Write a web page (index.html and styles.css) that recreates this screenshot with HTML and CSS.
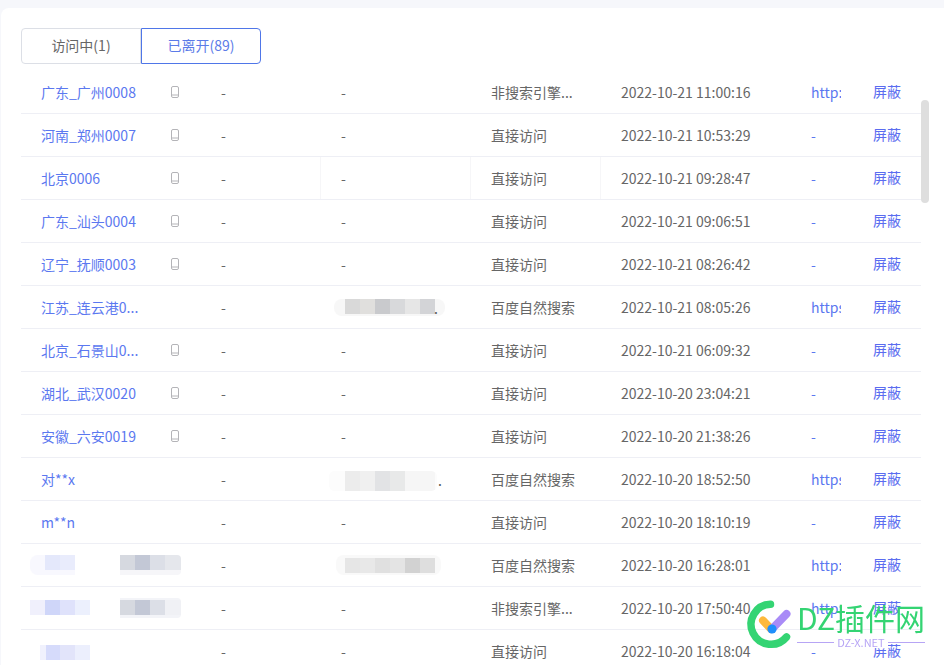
FILE: index.html
```html
<!DOCTYPE html>
<html lang="zh-CN">
<head>
<meta charset="utf-8">
<title>访客列表</title>
<link rel="stylesheet" href="styles.css">
</head>
<body>
<main class="card">
  <div class="tabs">
    <button class="tab">访问中(1)</button>
    <button class="tab active">已离开(89)</button>
  </div>
  <div class="rows">
    <div class="row"><span class="link">广东_广州0008</span><span><svg class="phone" viewBox="0 0 10 12"><rect x="1.5" y="0.5" width="7" height="11" rx="1.5"/><path d="M1.5 9h7"/></svg></span><span>-</span><span>-</span><span>非搜索引擎...</span><span>2022-10-21 11:00:16</span><span class="link"><span class="clip">http://www.example.com</span></span><span class="link act">屏蔽</span></div>
    <div class="row"><span class="link">河南_郑州0007</span><span><svg class="phone" viewBox="0 0 10 12"><rect x="1.5" y="0.5" width="7" height="11" rx="1.5"/><path d="M1.5 9h7"/></svg></span><span>-</span><span>-</span><span>直接访问</span><span>2022-10-21 10:53:29</span><span class="link">-</span><span class="link act">屏蔽</span></div>
    <div class="row ruled"><span class="link">北京0006</span><span><svg class="phone" viewBox="0 0 10 12"><rect x="1.5" y="0.5" width="7" height="11" rx="1.5"/><path d="M1.5 9h7"/></svg></span><span>-</span><span>-</span><span>直接访问</span><span>2022-10-21 09:28:47</span><span class="link">-</span><span class="link act">屏蔽</span></div>
    <div class="row"><span class="link">广东_汕头0004</span><span><svg class="phone" viewBox="0 0 10 12"><rect x="1.5" y="0.5" width="7" height="11" rx="1.5"/><path d="M1.5 9h7"/></svg></span><span>-</span><span>-</span><span>直接访问</span><span>2022-10-21 09:06:51</span><span class="link">-</span><span class="link act">屏蔽</span></div>
    <div class="row"><span class="link">辽宁_抚顺0003</span><span><svg class="phone" viewBox="0 0 10 12"><rect x="1.5" y="0.5" width="7" height="11" rx="1.5"/><path d="M1.5 9h7"/></svg></span><span>-</span><span>-</span><span>直接访问</span><span>2022-10-21 08:26:42</span><span class="link">-</span><span class="link act">屏蔽</span></div>
    <div class="row"><span class="link">江苏_连云港0...</span><span></span><span>-</span><span class="masked"><i class="blur b-a"></i><i class="tail t-a">.</i></span><span>百度自然搜索</span><span>2022-10-21 08:05:26</span><span class="link"><span class="clip">https://www.baidu.com</span></span><span class="link act">屏蔽</span></div>
    <div class="row"><span class="link">北京_石景山0...</span><span><svg class="phone" viewBox="0 0 10 12"><rect x="1.5" y="0.5" width="7" height="11" rx="1.5"/><path d="M1.5 9h7"/></svg></span><span>-</span><span>-</span><span>直接访问</span><span>2022-10-21 06:09:32</span><span class="link">-</span><span class="link act">屏蔽</span></div>
    <div class="row"><span class="link">湖北_武汉0020</span><span><svg class="phone" viewBox="0 0 10 12"><rect x="1.5" y="0.5" width="7" height="11" rx="1.5"/><path d="M1.5 9h7"/></svg></span><span>-</span><span>-</span><span>直接访问</span><span>2022-10-20 23:04:21</span><span class="link">-</span><span class="link act">屏蔽</span></div>
    <div class="row"><span class="link">安徽_六安0019</span><span><svg class="phone" viewBox="0 0 10 12"><rect x="1.5" y="0.5" width="7" height="11" rx="1.5"/><path d="M1.5 9h7"/></svg></span><span>-</span><span>-</span><span>直接访问</span><span>2022-10-20 21:38:26</span><span class="link">-</span><span class="link act">屏蔽</span></div>
    <div class="row"><span class="link">对**x</span><span></span><span>-</span><span class="masked"><i class="blur b-b"></i><i class="tail t-b">.</i></span><span>百度自然搜索</span><span>2022-10-20 18:52:50</span><span class="link"><span class="clip">https://www.baidu.com</span></span><span class="link act">屏蔽</span></div>
    <div class="row"><span class="link">m**n</span><span></span><span>-</span><span>-</span><span>直接访问</span><span>2022-10-20 18:10:19</span><span class="link">-</span><span class="link act">屏蔽</span></div>
    <div class="row"><span class="masked"><i class="blur b-c"></i><i class="blur b-d"></i></span><span></span><span>-</span><span class="masked"><i class="blur b-e"></i></span><span>百度自然搜索</span><span>2022-10-20 16:28:01</span><span class="link"><span class="clip">http://www.example.com</span></span><span class="link act">屏蔽</span></div>
    <div class="row"><span class="masked"><i class="blur b-f"></i><i class="blur b-g"></i></span><span></span><span>-</span><span>-</span><span>非搜索引擎...</span><span>2022-10-20 17:50:40</span><span class="link"><span class="clip">http://www.example.com</span></span><span class="link act">屏蔽</span></div>
    <div class="row"><span class="masked"><i class="blur b-h"></i></span><span></span><span>-</span><span>-</span><span>直接访问</span><span>2022-10-20 16:18:04</span><span class="link">-</span><span class="link act">屏蔽</span></div>
  </div>
  <div class="thumb"></div>
</main>
<aside class="mark">
  <svg class="mark-logo" viewBox="0 0 50 50">
    <path class="ring" d="M26.5 4.3A20 20 0 1 0 42.5 37"/>
    <path class="tick-y" d="M19 20.5L27 29"/>
    <path class="tick-p" d="M28 29L42.5 14"/>
    <circle class="tick-b" cx="28" cy="29" r="4.6"/>
  </svg>
  <div class="mark-text">
    <div class="mark-name">DZ插件网</div>
    <div class="mark-sub"><span>DZ-X.NET</span></div>
  </div>
</aside>
</body>
</html>
```
FILE: styles.css
```css
* { box-sizing: border-box; }
html, body { height: 100%; }
body {
  margin: 0;
  padding: 8px 0 0 1px;
  overflow: hidden;
  background: #f6f7fb;
  font: 14px/20px "Noto Sans CJK SC", "Liberation Sans", sans-serif;
  color: #666;
}
.card {
  position: relative;
  height: 657px;
  overflow: hidden;
  padding: 20px 0 0 20px;
  background: #fff;
  border-radius: 8px 0 0 0;
}
.tabs { display: flex; height: 36px; margin-bottom: 7px; }
.tab {
  width: 120px;
  height: 36px;
  padding: 0 0 2px;
  background: #fff;
  border: 1px solid #dcdfe6;
  border-radius: 4px 0 0 4px;
  font: inherit;
  color: #666;
}
.tab.active {
  border-color: #4f76e8;
  border-radius: 0 4px 4px 0;
  color: #5b7be8;
}
.rows { width: 900px; }
.row {
  display: grid;
  grid-template-columns: 140px 40px 120px 150px 130px 190px 62px 68px;
  height: 43px;
  border-bottom: 1px solid #eeeff5;
}
.row > span {
  position: relative;
  display: flex;
  align-items: center;
  min-width: 0;
  padding-left: 20px;
  white-space: nowrap;
}
.ruled > span:nth-child(3),
.ruled > span:nth-child(4),
.ruled > span:nth-child(5) { border-right: 1px solid #f6f6f8; }
.link { color: #5b78f0; }
.act { padding-bottom: 2px; color: #5a6cf0; }
.clip { display: block; width: 30px; overflow: hidden; }
.phone {
  width: 10px;
  height: 12px;
  margin-left: -11px;
  margin-top: -1px;
  fill: none;
  stroke: #b4b4b8;
  stroke-width: 1;
}
.blur { position: absolute; display: block; }
.tail { position: absolute; font-style: normal; color: #555; }
.t-a { left: 113px; top: 12px; }
.t-b { left: 117px; top: 12px; }
.b-a {
  left: 13px; top: 13px; width: 111px; height: 17px;
  border-radius: 8px;
  background:
    linear-gradient(90deg, transparent 11px, #d9d9d9 11px 26px, #e0dfdd 26px 41px, #c9cacd 41px 56px, #d8d9db 56px 71px, #e6e6e6 71px 86px, #d3d4d7 86px 101px, transparent 101px) 0 0 / 100% 15px no-repeat,
    #f7f7f7;
}
.b-b {
  left: 8px; top: 13px; width: 108px; height: 20px;
  border-radius: 6px;
  background:
    linear-gradient(90deg, transparent 16px, #ececec 16px 31px, #f0f0f0 31px 46px, #e2e3e5 46px 61px, #e8e9e9 61px 76px, #f6f6f6 76px 106px, transparent 106px),
    #fcfcfc;
}
.b-c {
  left: 9px; top: 11px; width: 45px; height: 20px;
  border-radius: 8px 0 0 8px;
  background:
    linear-gradient(90deg, transparent 15px, #e4e8fb 15px 30px, #e9ecfc 30px 45px) 0 0 / 100% 15px no-repeat,
    #f8f8fe;
}
.b-d {
  left: 99px; top: 11px; width: 61px; height: 20px;
  border-radius: 0 4px 4px 0;
  background:
    linear-gradient(90deg, #d6d9e0 0 15px, #c3c8d6 15px 30px, #dcdfe7 30px 45px, #e5e7ec 45px 60px) 0 0 / 100% 15px no-repeat,
    #f6f6f9;
}
.b-e {
  left: 15px; top: 11px; width: 105px; height: 20px;
  border-radius: 8px;
  background:
    linear-gradient(90deg, transparent 9px, #e6e6e6 9px 24px, #e8e8e8 24px 39px, #e0e0e0 39px 54px, #e4e4e4 54px 69px, #d2d2d2 69px 84px, #dedede 84px 99px, transparent 99px) 0 3px / 100% 15px no-repeat,
    #f9f9f9;
}
.b-f {
  left: 9px; top: 13px; width: 60px; height: 15px;
  background: linear-gradient(90deg, #f0f0fc 0 15px, #cfd6f9 15px 30px, #dfe2fb 30px 45px, #ecf0fd 45px 60px);
}
.b-g {
  left: 99px; top: 11px; width: 61px; height: 20px;
  border-radius: 0 4px 4px 0;
  background:
    linear-gradient(90deg, #d6d9e0 0 15px, #c3c8d6 15px 30px, #dcdfe7 30px 45px, #f0f1f5 45px 60px) 0 2px / 100% 15px no-repeat,
    #f3f4f8;
}
.b-h {
  left: 19px; top: 15px; width: 50px; height: 15px;
  background: linear-gradient(90deg, #f0f1fd 0 6px, #d6dbfb 6px 20px, #e2e4fa 20px 35px, #eceffd 35px 50px);
}
.thumb {
  position: absolute;
  left: 920px;
  top: 92px;
  width: 8px;
  height: 103px;
  border-radius: 4px;
  background: #dedede;
}
.mark {
  position: fixed;
  left: 744px;
  top: 600px;
  display: flex;
  align-items: flex-start;
  gap: 3px;
}
.mark-logo { width: 50px; height: 50px; fill: none; stroke-linecap: round; }
.ring { stroke: #34d473; stroke-width: 7.5; }
.tick-y { stroke: #fdb93c; stroke-width: 8; }
.tick-p { stroke: #a98bf7; stroke-width: 8; }
.tick-b { fill: #1f8ffb; }
.mark-text { width: 128px; }
.mark-name {
  height: 35px;
  font-size: 30px;
  font-weight: 400;
  line-height: 35px;
  white-space: nowrap;
  color: #34d473;
}
.mark-sub {
  display: flex;
  align-items: center;
  justify-content: center;
  margin-top: 1px;
  height: 12px;
  font-size: 11px;
  line-height: 12px;
  color: #b7a5f5;
  background: linear-gradient(#b7a5f5, #b7a5f5) center / 100% 1px no-repeat;
}
.mark-sub span { padding: 0 3px; background: #fff; }
```
